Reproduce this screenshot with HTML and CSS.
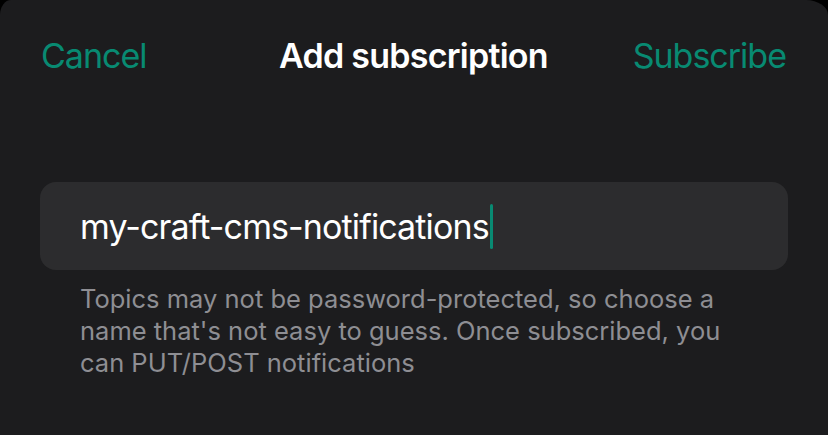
FILE: index.html
```html
<!DOCTYPE html>
<html lang="en">
<head>
<meta charset="utf-8">
<title>Add subscription</title>
<link rel="stylesheet" href="styles.css">
</head>
<body>
<div class="sheet">
  <header class="nav">
    <span class="nav-btn nav-left">Cancel</span>
    <span class="nav-title">Add subscription</span>
    <span class="nav-btn nav-right">Subscribe</span>
  </header>
  <section class="form">
    <div class="field"><span class="field-text">my-craft-cms-notifications</span><span class="caret"></span></div>
    <p class="footer">Topics may not be password-protected, so choose a name that's not easy to guess. Once subscribed, you can PUT/POST notifications</p>
  </section>
</div>
</body>
</html>
```
FILE: styles.css
```css
html, body {
  margin: 0;
  padding: 0;
  background: #000;
  height: 100%;
}
body {
  font-family: Inter, "Noto Sans", "Liberation Sans", sans-serif;
  -webkit-font-smoothing: antialiased;
}
.sheet {
  background: #1c1c1e;
  height: 435px;
  border-top-left-radius: 11px 15px;
  border-top-right-radius: 22px 15px;
  overflow: hidden;
}
.nav {
  display: grid;
  grid-template-columns: 1fr auto 1fr;
  align-items: baseline;
  padding: 35px 42px 0 41px;
  font-size: 34px;
  line-height: 41px;
}
.nav-btn {
  color: #088a72;
  letter-spacing: -1px;
}
.nav-left {
  justify-self: start;
}
.nav-right {
  justify-self: end;
}
.nav-title {
  color: #fff;
  font-weight: 600;
  letter-spacing: -0.75px;
}
.form {
  padding: 0 40px;
  margin-top: 106px;
}
.field {
  background: #2c2c2e;
  border-radius: 16px;
  height: 88px;
  display: flex;
  align-items: center;
  padding-left: 40px;
}
.field-text {
  color: #fff;
  font-size: 34px;
  line-height: 41px;
  letter-spacing: -0.88px;
}
.caret {
  width: 3px;
  height: 45px;
  background: #088a72;
  border-radius: 2px;
  margin-left: 1px;
}
.footer {
  margin: 13px 0 0;
  padding: 0 40px;
  color: #8e8e93;
  font-size: 25.5px;
  line-height: 32px;
}
```
